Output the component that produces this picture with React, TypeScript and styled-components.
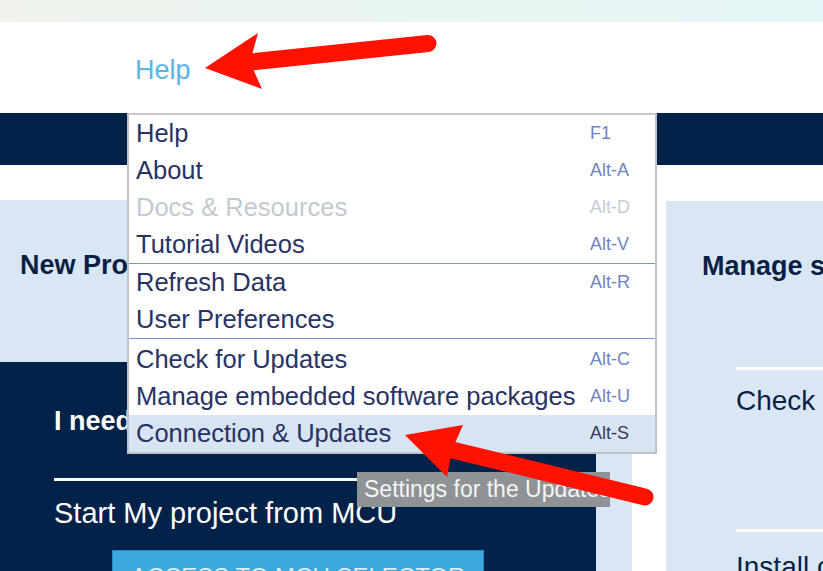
import React from "react";
import styled, { createGlobalStyle } from "styled-components";

const GlobalStyle = createGlobalStyle`
	html, body {
		margin: 0;
		padding: 0;
		background: #fff;
		overflow: hidden;
	}
	body {
		font-family: "Liberation Sans", Arial, sans-serif;
	}
`;

type MenuEntry = {
	label: string;
	keys?: string;
	disabled?: boolean;
	active?: boolean;
};

const groups: MenuEntry[][] = [
	[
		{ label: "Help", keys: "F1" },
		{ label: "About", keys: "Alt-A" },
		{ label: "Docs & Resources", keys: "Alt-D", disabled: true },
		{ label: "Tutorial Videos", keys: "Alt-V" },
	],
	[{ label: "Refresh Data", keys: "Alt-R" }, { label: "User Preferences" }],
	[
		{ label: "Check for Updates", keys: "Alt-C" },
		{ label: "Manage embedded software packages", keys: "Alt-U" },
		{ label: "Connection & Updates", keys: "Alt-S", active: true },
	],
];

function Arrows() {
	return (
		<Overlay width="823" height="571" viewBox="0 0 823 571">
			<g fill="#ff1200" stroke="none">
				<polygon points="205,68 258,33 250,62 262,89" />
				<polygon points="405,435 463,425 452,450 447,477" />
			</g>
			<g stroke="#ff1200" strokeWidth="17" strokeLinecap="round">
				<line x1="246" y1="62.5" x2="428" y2="43.5" />
				<line x1="448" y1="449" x2="645" y2="497" />
			</g>
		</Overlay>
	);
}

export default function App() {
	return (
		<Page>
			<GlobalStyle />
			<TopStrip />
			<Header>
				<NavLink>Help</NavLink>
			</Header>
			<NavBand />
			<Content>
				<LeftPanel>
					<PanelTitle>New Project</PanelTitle>
					<DarkCard>
						<CardTitle>I need to :</CardTitle>
						<Rule />
						<CardText>Start My project from MCU</CardText>
						<ActionButton>ACCESS TO MCU SELECTOR</ActionButton>
					</DarkCard>
				</LeftPanel>
				<Spacer />
				<RightPanel>
					<PanelTitle>Manage software installations</PanelTitle>
					<LightCard>
						<Rule />
						<LightText>Check for STM32CubeMX and embedded software packages updates</LightText>
						<Rule />
						<LightText>Install or remove embedded software packages</LightText>
					</LightCard>
				</RightPanel>
			</Content>

			<Menu>
				{groups.map((group, gi) => (
					<Group key={gi} $index={gi}>
						{group.map((item) => (
							<Item key={item.label} $active={item.active}>
								<ItemLabel $disabled={item.disabled}>{item.label}</ItemLabel>
								<Keys $disabled={item.disabled} $active={item.active}>
									{item.keys}
								</Keys>
							</Item>
						))}
					</Group>
				))}
			</Menu>
			<Tooltip>Settings for the Updates</Tooltip>
			<Arrows />
		</Page>
	);
}

const Page = styled.div`
	position: relative;
	width: 823px;
	height: 571px;
	overflow: hidden;
	background: #fff;
`;

const TopStrip = styled.div`
	height: 22px;
	background: linear-gradient(90deg, #eff3ec 0%, #e9f5f1 50%, #e3f5f6 100%);
`;

const Header = styled.div`
	height: 91px;
	box-sizing: border-box;
	display: flex;
	align-items: center;
	padding: 6px 0 0 135px;
`;

const NavLink = styled.span`
	color: #5db4e6;
	font-size: 27px;
	line-height: 1;
	cursor: pointer;
`;

const NavBand = styled.div`
	height: 52px;
	background: #032249;
`;

const Content = styled.div`
	display: grid;
	grid-template-columns: 632px 34px 1fr;
	padding-top: 35px;
`;

const LeftPanel = styled.div`
	background: #d9e7f4;
	padding-right: 36px;
	height: 400px;
`;

const Spacer = styled.div``;

const RightPanel = styled.div`
	background: #d9e7f4;
	padding-left: 36px;
	margin-top: 1px;
	height: 400px;
	white-space: nowrap;
`;

const PanelTitle = styled.div`
	font-size: 27px;
	font-weight: bold;
	color: #0b1f45;
	line-height: 30px;
	margin: 50px 0 0 20px;
	height: 112px;
	white-space: nowrap;

	${RightPanel} & {
		margin-left: 0;
		height: 111px;
	}
`;

const DarkCard = styled.div`
	background: #032249;
	padding: 44px 54px 0;
	height: 300px;
`;

const CardTitle = styled.div`
	color: #fff;
	font-size: 27px;
	font-weight: bold;
	line-height: 30px;
	white-space: nowrap;
	margin-bottom: 42px;
`;

const Rule = styled.div`
	height: 3px;
	background: #fff;
	margin-bottom: 15px;

	${RightPanel} & {
		margin-bottom: 14px;
	}
`;

const CardText = styled.div`
	color: #fff;
	font-size: 29px;
	line-height: 34px;
	white-space: nowrap;
	margin-bottom: 20px;
`;

const ActionButton = styled.div`
	margin-left: 58px;
	width: 372px;
	height: 50px;
	box-sizing: border-box;
	background: #3aa9dc;
	border: 1px solid #2a86c4;
	color: #dcedf8;
	font-size: 24px;
	text-align: center;
	padding-top: 12px;
	white-space: nowrap;
`;

const LightCard = styled.div`
	padding: 0 0 0 34px;
	margin-top: 5px;
`;

const LightText = styled.div`
	color: #0b1f45;
	font-size: 28px;
	line-height: 34px;
	height: 145px;

	& + ${Rule} {
		margin-bottom: 18px;
	}
`;

const Menu = styled.div`
	position: absolute;
	left: 127px;
	top: 113px;
	width: 530px;
	box-sizing: border-box;
	background: #fff;
	border: 2px solid #bcc3ca;
	border-top-color: #c3cad0;
	font-family: "Liberation Sans", Arial, sans-serif;
`;

const Group = styled.div<{ $index: number }>`
	padding-top: ${(p) => (p.$index === 2 ? "2px" : "0")};

	& + & {
		border-top: 1.5px solid #7f92d0;
	}
`;

const Item = styled.div<{ $active?: boolean }>`
	display: grid;
	grid-template-columns: 1fr 65px;
	align-items: center;
	height: 37px;
	padding-left: 7px;
	background: ${(p) => (p.$active ? "#d7e5f3" : "transparent")};
`;

const ItemLabel = styled.span<{ $disabled?: boolean }>`
	font-size: 25.5px;
	color: ${(p) => (p.$disabled ? "#c3c9cf" : "#283264")};
	white-space: nowrap;
`;

const Keys = styled.span<{ $disabled?: boolean; $active?: boolean }>`
	font-size: 18px;
	color: ${(p) => (p.$disabled ? "#c6ccd4" : p.$active ? "#3b3b58" : "#6f84c4")};
	white-space: nowrap;
`;

const Tooltip = styled.div`
	position: absolute;
	left: 357px;
	top: 472px;
	width: 253px;
	height: 35px;
	box-sizing: border-box;
	background: #8e9397;
	color: #f5f5f5;
	font-size: 23px;
	line-height: 35px;
	padding-left: 7px;
	white-space: nowrap;
	overflow: hidden;
`;

const Overlay = styled.svg`
	position: absolute;
	left: 0;
	top: 0;
	pointer-events: none;
`;
